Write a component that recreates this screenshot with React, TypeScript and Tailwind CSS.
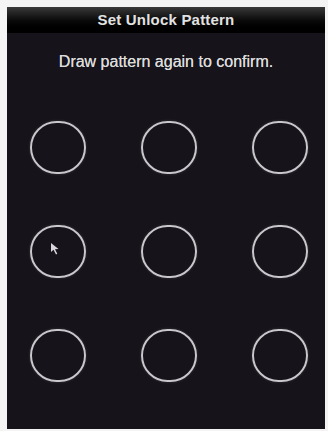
const rows = [0, 1, 2];
const cols = [0, 1, 2];

const PatternDot = ({ cursor }: { cursor?: boolean }) => (
  <div className="relative w-[56px] h-[53px] rounded-full border-2 border-[#c9c7cc] shadow-[0_0_3px_rgba(255,255,255,0.15)]">
    {cursor && (
      <svg
        className="absolute left-[18px] top-[15px]"
        width="10"
        height="14"
        viewBox="0 0 10 14"
      >
        <path d="M1 1 L1 10 L3.5 7.8 L6 12.5 L7.3 11.8 L5 7.2 L8.5 7 Z" fill="#d8d6dc" />
      </svg>
    )}
  </div>
);

export default function App() {
  return (
    <div className="w-[328px] h-[431px] bg-[#f4f4f4] pt-[7px] pl-[7px]">
      <div
        className="w-[318px] h-[422px] bg-[#16131a] flex flex-col"
        style={{ fontFamily: '"Liberation Sans", Arial, sans-serif' }}
      >
        <div className="h-[26px] bg-gradient-to-b from-[#3a3a3a] via-[#0c0c0c] to-[#000000] flex items-center justify-center">
          <span className="text-[15px] font-bold text-[#e2e2e2] tracking-[0.2px]">Set Unlock Pattern</span>
        </div>
        <div className="mt-[19px] text-center text-[16px] leading-[20px] text-[#dcdcdc] [text-shadow:0_0_0.6px_#dcdcdc]">
          Draw pattern again to confirm.
        </div>
        <div className="mt-[49px] pl-[23px] flex flex-col gap-[51px]">
          {rows.map((r) => (
            <div key={r} className="flex gap-[55px]">
              {cols.map((c) => (
                <PatternDot key={c} cursor={r === 1 && c === 0} />
              ))}
            </div>
          ))}
        </div>
      </div>
    </div>
  );
}
